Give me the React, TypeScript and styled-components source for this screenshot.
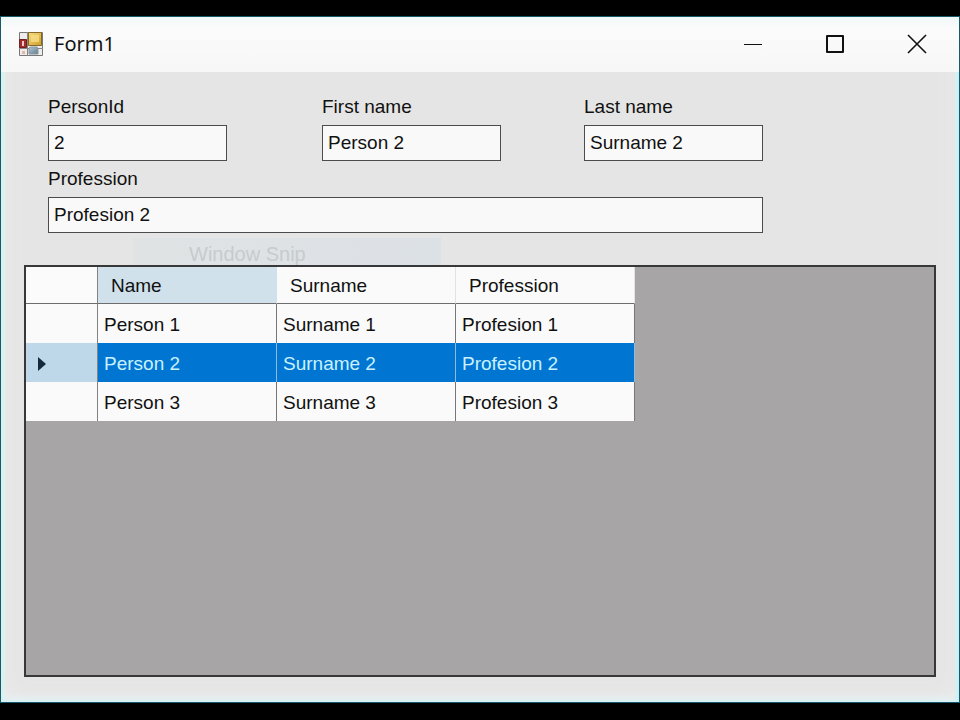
import React, { useState } from "react";
import styled, { createGlobalStyle } from "styled-components";

const GlobalStyle = createGlobalStyle`
  * { box-sizing: border-box; }
  body {
    margin: 0;
    background: #000;
    color: #111;
    font-family: "Liberation Sans", Arial, sans-serif;
    font-size: 19px;
    line-height: 24px;
  }
`;

const Desktop = styled.div`
  display: flex;
  min-height: 100vh;
  padding: 16px 0 17px;
`;

const Window = styled.main`
  flex: 1;
  display: flex;
  flex-direction: column;
  border: 1px solid #155a66;
  background: #e6e5e5;
  box-shadow: inset 3px 0 3px #d8f2f4, inset -3px 0 3px #c8f1f6, inset 0 -4px 6px #e0f1f3, inset 0 0 24px #efefef;
`;

const TitleBar = styled.header`
  display: flex;
  align-items: center;
  height: 55px;
  padding: 0 1px 2px 17px;
  background: linear-gradient(#f0f8f8, #fbfbfb 20%, #f7f7f7);
`;

const Title = styled.h1`
  flex: 1;
  margin: 0 0 0 10px;
  font: 400 20px/28px "Noto Sans", "Open Sans", sans-serif;
`;

const CaptionButton = styled.button`
  display: grid;
  place-items: center;
  width: 82px;
  height: 52px;
  padding: 0;
  border: 0;
  background: none;
  color: #111;
`;

const Form = styled.form`
  display: grid;
  grid-template-columns: 274fr 262fr 179fr;
  margin: 22px 196px 0 47px;
`;

const Field = styled.div<{ $wide?: boolean }>`
  grid-column: ${(p) => (p.$wide ? "1 / -1" : "auto")};
  display: flex;
  flex-direction: column;
  align-items: flex-start;
`;

const Label = styled.label`
  height: 31px;
  line-height: 26px;
`;

const TextBox = styled.input<{ $wide?: boolean }>`
  width: ${(p) => (p.$wide ? "100%" : "179px")};
  height: 36px;
  margin-bottom: 5px;
  padding: 0 5px;
  border: 1px solid #4c4c4c;
  border-radius: 0;
  background: #faf9f9;
  color: #111;
  font: inherit;
  outline: none;
`;

const Ghost = styled.div`
  width: 308px;
  height: 27px;
  margin-left: 132px;
  padding: 4px 56px 0;
  background: linear-gradient(90deg, #e0e3e4, #dce1e6);
  color: #c6cbcd;
  font-size: 20px;
  white-space: nowrap;
  overflow: hidden;
`;

const GridPanel = styled.section`
  flex: 1;
  margin: 0 23px 25px;
  border: 2px solid #383838;
  background: #a7a5a5;
`;

const Table = styled.table`
  width: 609px;
  table-layout: fixed;
  border-collapse: separate;
  border-spacing: 0;
`;

const Corner = styled.td`
  width: 72px;
  border-right: 1px solid #828282;
  border-bottom: 1px solid #6d6d6d;
  background: #fbfbfb;
`;

const ColumnHeader = styled.th<{ $active: boolean }>`
  height: 37px;
  padding: 2px 13px 0;
  border-right: 1px solid ${(p) => (p.$active ? "#d0e1ec" : "#e2e2e2")};
  border-bottom: 1px solid #6d6d6d;
  background: ${(p) => (p.$active ? "#d0e1ec" : "#fafafa")};
  font-weight: 400;
  text-align: left;
`;

const RowHeader = styled.th<{ $selected: boolean }>`
  padding: 2px 0 0 11px;
  border-right: 1px solid #828282;
  background: ${(p) => (p.$selected ? "#bfd8e9" : "#fafafa")};
  text-align: left;
`;

const Row = styled.tr<{ $selected: boolean }>`
  height: 39px;
  background: ${(p) => (p.$selected ? "#0076d2" : "#fafafa")};
  color: ${(p) => (p.$selected ? "#c9f1ff" : "#111")};
`;

const Cell = styled.td<{ $selected: boolean }>`
  padding: 2px 6px 0;
  border-right: 1px solid ${(p) => (p.$selected ? "#91bbdc" : "#777")};
`;

const Marker = styled.svg`
  display: block;
`;

const columns = ["Name", "Surname", "Profession"];
const people = [1, 2, 3].map((id) => ({
  id,
  cells: [`Person ${id}`, `Surname ${id}`, `Profesion ${id}`],
}));

function FormIcon() {
  return (
    <svg width="26" height="26" viewBox="0 0 26 26" aria-hidden="true">
      <defs>
        <linearGradient id="gold" x1="0" y1="0" x2="1" y2="1">
          <stop offset="0" stopColor="#f6df83" />
          <stop offset="1" stopColor="#cf9d27" />
        </linearGradient>
        <linearGradient id="steel" x1="0" y1="0" x2="1" y2="1">
          <stop offset="0" stopColor="#b4c4ce" />
          <stop offset="1" stopColor="#617e92" />
        </linearGradient>
      </defs>
      <path d="M1.500 1.500h23v23h-23z" fill="#efedec" stroke="#777" />
      <path d="M9.500 1v24M1 17.500h24" stroke="#8c8585" />
      <path d="M10.500 1.500h13v13h-13z" fill="url(#gold)" stroke="#85692a" />
      <path d="M13 4h8v7h-8z" fill="#f6dc85" opacity=".8" />
      <path d="M1.500 8.500h7v8h-7z" fill="#a32b2b" stroke="#702020" />
      <path d="M4 10h2v5H4z" fill="#e8c8c3" />
      <path d="M11 17l2-1h6l1 2v5h-9z" fill="url(#steel)" stroke="#8798a2" />
      <path d="M4 20h3v3H4z" fill="#e7b4ac" />
    </svg>
  );
}

export default function App() {
  const [selected, setSelected] = useState(1);
  const [name, surname, profession] = people[selected].cells;
  return (
    <Desktop>
      <GlobalStyle />
      <Window>
        <TitleBar>
          <FormIcon />
          <Title>Form1</Title>
          <CaptionButton aria-label="Minimize">
            <svg width="18" height="18"><path d="M0 9.500h18" stroke="currentColor" /></svg>
          </CaptionButton>
          <CaptionButton aria-label="Maximize">
            <svg width="20" height="20"><path d="M2 2h16v16H2z" fill="none" stroke="currentColor" strokeWidth="2" strokeLinejoin="round" /></svg>
          </CaptionButton>
          <CaptionButton aria-label="Close">
            <svg width="20" height="20"><path d="M1 1l18 18M19 1L1 19" stroke="currentColor" strokeWidth="1.600" /></svg>
          </CaptionButton>
        </TitleBar>
        <Form onSubmit={(e) => e.preventDefault()}>
          <Field>
            <Label htmlFor="person-id">PersonId</Label>
            <TextBox id="person-id" value={people[selected].id} readOnly />
          </Field>
          <Field>
            <Label htmlFor="first-name">First name</Label>
            <TextBox id="first-name" value={name} readOnly />
          </Field>
          <Field>
            <Label htmlFor="last-name">Last name</Label>
            <TextBox id="last-name" value={surname} readOnly />
          </Field>
          <Field $wide>
            <Label htmlFor="profession">Profession</Label>
            <TextBox id="profession" $wide value={profession} readOnly />
          </Field>
        </Form>
        <Ghost>Window Snip</Ghost>
        <GridPanel>
          <Table>
            <thead>
              <tr>
                <Corner />
                {columns.map((c, i) => (
                  <ColumnHeader key={c} scope="col" $active={i === 0}>{c}</ColumnHeader>
                ))}
              </tr>
            </thead>
            <tbody>
              {people.map((p, i) => (
                <Row key={p.id} $selected={i === selected} onClick={() => setSelected(i)}>
                  <RowHeader scope="row" $selected={i === selected}>
                    {i === selected && (
                      <Marker width="10" height="16" aria-label="Current row">
                        <path d="M1 1v14l8-7z" fill="#14293a" />
                      </Marker>
                    )}
                  </RowHeader>
                  {p.cells.map((c) => (
                    <Cell key={c} $selected={i === selected}>{c}</Cell>
                  ))}
                </Row>
              ))}
            </tbody>
          </Table>
        </GridPanel>
      </Window>
    </Desktop>
  );
}
